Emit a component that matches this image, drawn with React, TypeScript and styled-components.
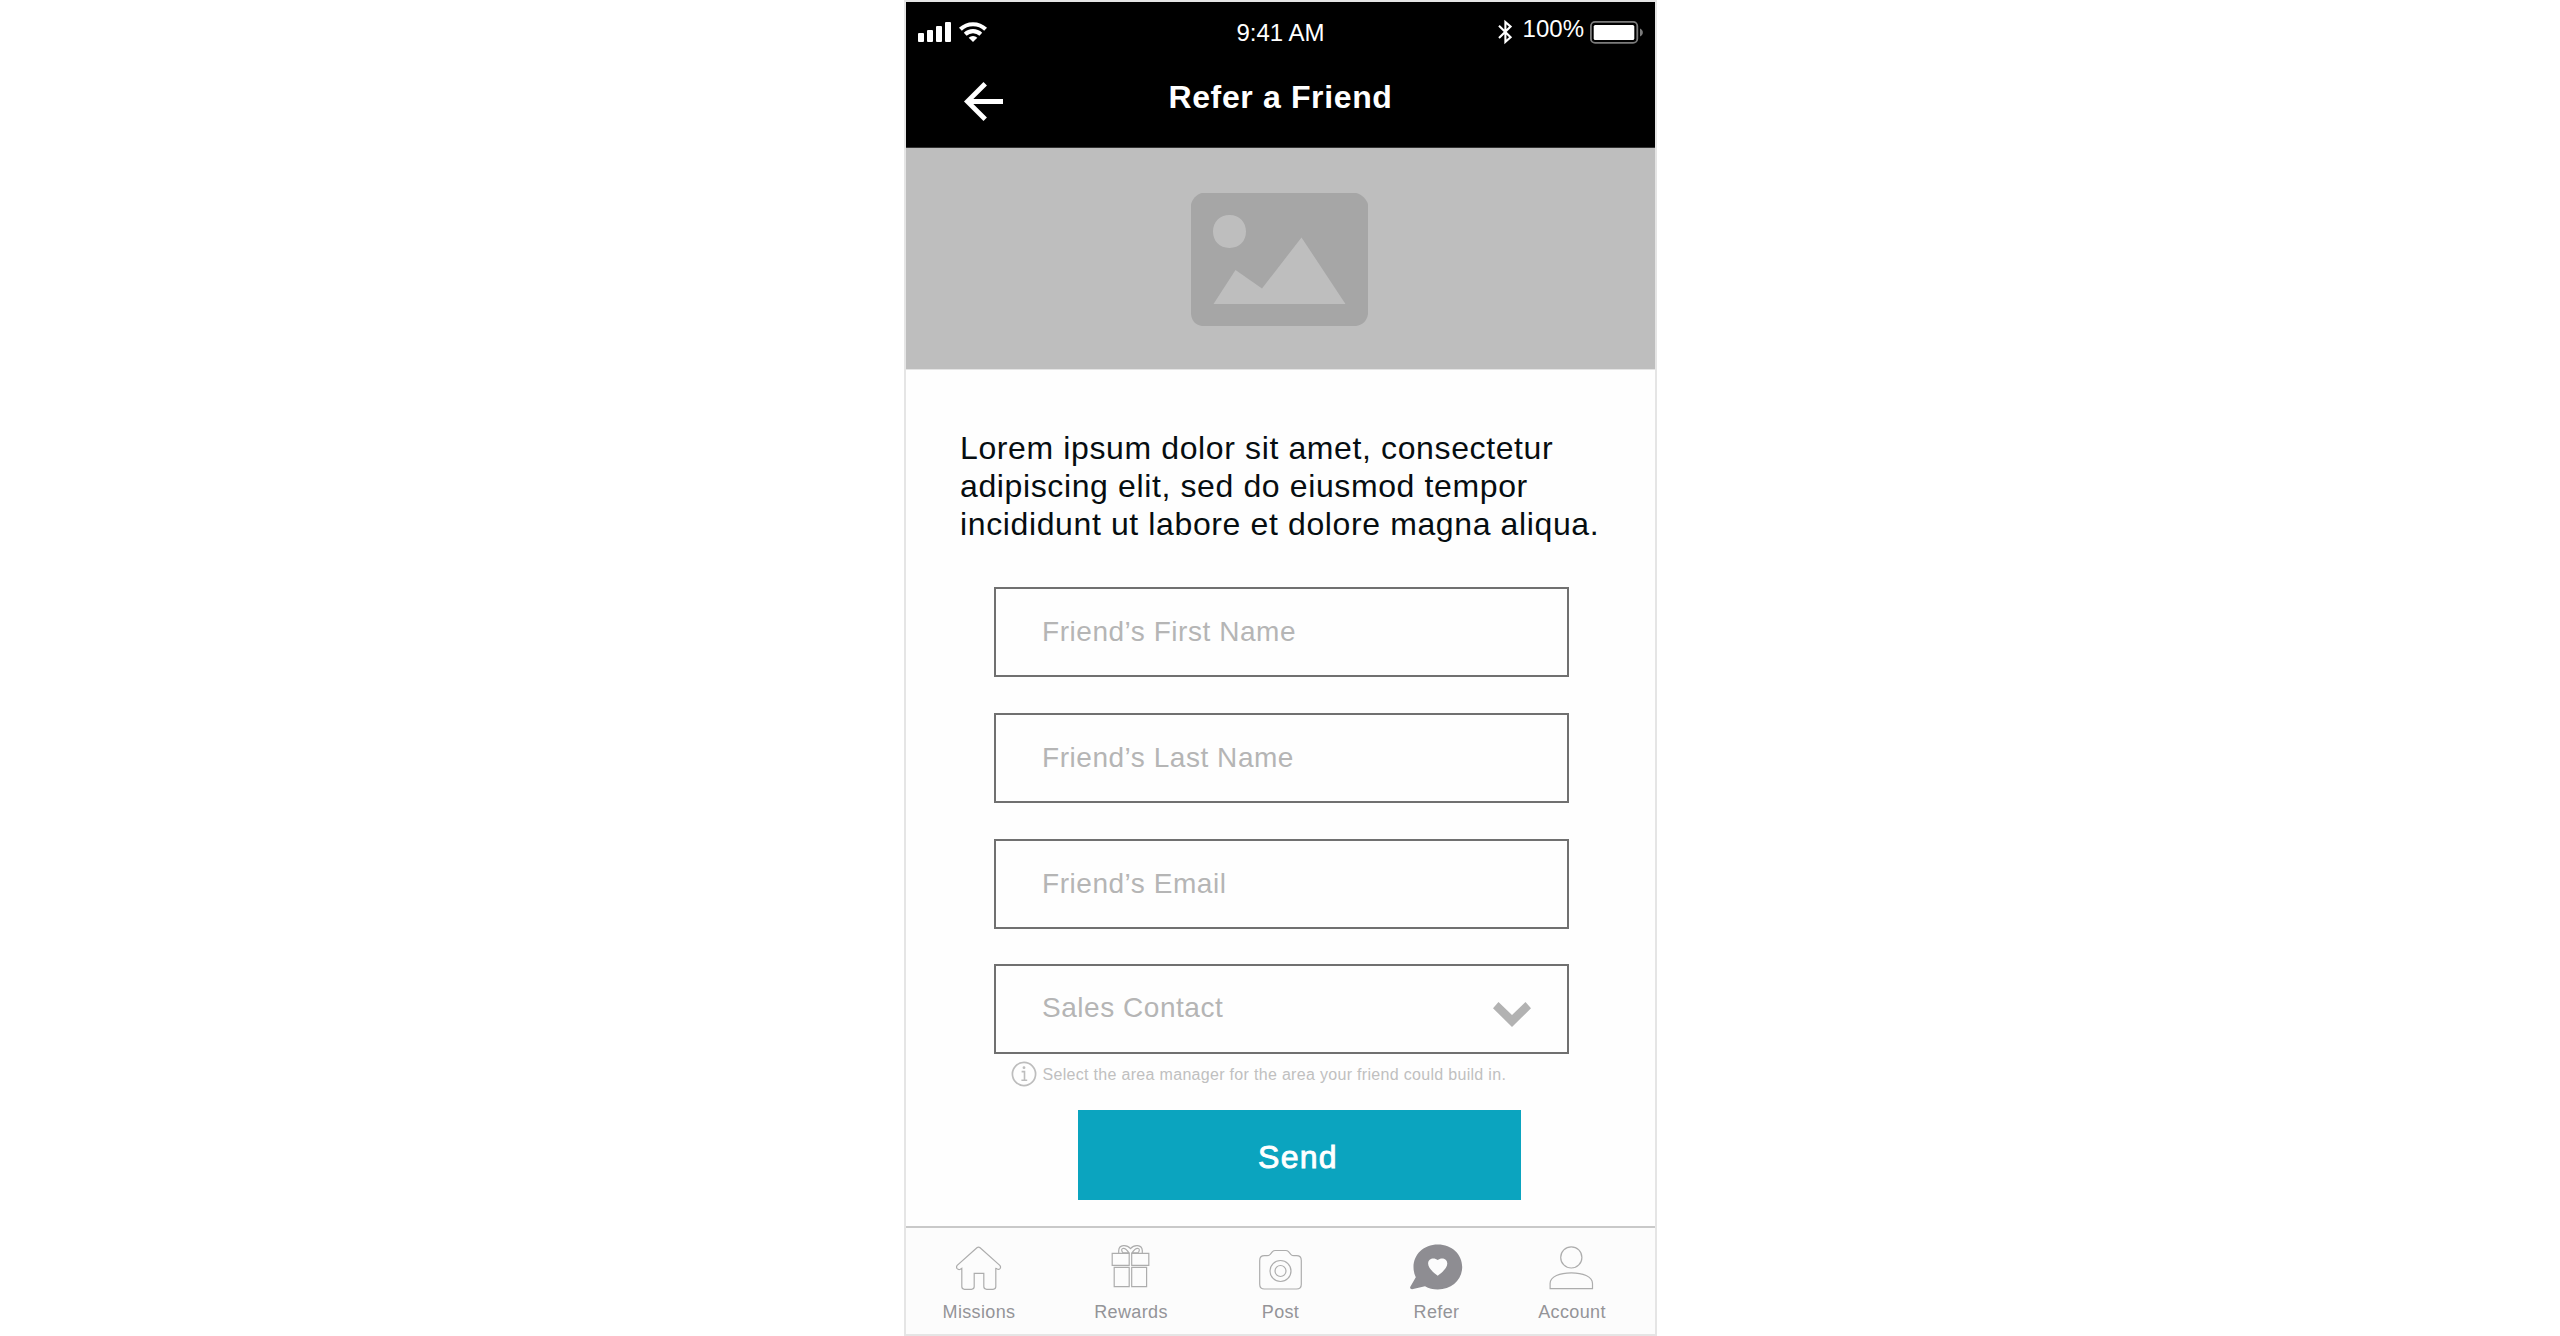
import React from "react";
import styled, { createGlobalStyle } from "styled-components";

const GlobalStyle = createGlobalStyle`
  *, *::before, *::after { box-sizing: border-box; }
  body {
    margin: 0;
    background: #ffffff;
    font-family: "Liberation Sans", Arial, Helvetica, sans-serif;
  }
  svg { display: block; flex: none; }
`;

const Stage = styled.div`
  display: flex;
  justify-content: flex-start;
  width: 2560px;
  height: 1336px;
  padding-left: 904px;
  overflow: hidden;
`;

const Phone = styled.main`
  display: flex;
  flex-direction: column;
  width: 753px;
  height: 1336px;
  border: 2px solid #e5e5e5;
  background: #fefefe;
`;

const Header = styled.header`
  height: 146px;
  flex: none;
  background: #000000;
  border-bottom: 1px solid #333333;
  color: #ffffff;
`;

const StatusBar = styled.div`
  display: grid;
  grid-template-columns: 1fr auto 1fr;
  align-items: start;
  height: 77px;
  padding: 13px 11px 0 12px;
  font-size: 24px;
  line-height: 27px;
`;

const SignalGroup = styled.div`
  padding-top: 7px;
`;

const Clock = styled.time`
  padding: 4px 1px 0 0;
`;

const BatteryGroup = styled.div`
  display: flex;
  justify-content: flex-end;
`;

const BatteryLevel = styled.span`
  margin: 0 6px 0 10px;
`;

const NavBar = styled.div`
  display: grid;
  grid-template-columns: 1fr auto 1fr;
  align-items: start;
  padding: 0 58px;
`;

const Title = styled.h1`
  margin: 0;
  font-size: 32px;
  line-height: 36px;
  font-weight: 700;
  letter-spacing: 0.64px;
`;

const BackButton = styled.button`
  display: flex;
  padding: 3px 0 0;
  border: 0;
  background: none;
  color: inherit;
`;

const Hero = styled.div`
  display: flex;
  justify-content: center;
  height: 222px;
  flex: none;
  padding: 44.7px 1.6px 0 0;
  background: #bebebe;
  border-bottom: 1px solid #e4e4e4;
`;

const Content = styled.section`
  display: flex;
  flex-direction: column;
  height: 856px;
  flex: none;
  padding-top: 59px;
`;

const Intro = styled.p`
  margin: 0 0 44px 54px;
  width: 660px;
  font-size: 32px;
  line-height: 38px;
  letter-spacing: 0.62px;
  color: #060d10;
`;

const Form = styled.div`
  display: flex;
  flex-direction: column;
  gap: 35.8px;
  margin-left: 88px;
  width: 575px;
`;

const Field = styled.div<{ $lift?: number }>`
  display: flex;
  justify-content: space-between;
  height: 90px;
  padding: ${(p) => 27 - (p.$lift ?? 0)}px 36.5px 0 46px;
  border: 2px solid #707070;
  font-size: 28px;
  line-height: 31px;
  letter-spacing: 0.54px;
  color: #b5b5b5;
`;

const Hint = styled.div`
  display: flex;
  margin: 7px 0 0 105px;
  font-size: 16px;
  line-height: 18px;
  letter-spacing: 0.31px;
  color: #c0c0c0;
`;

const HintText = styled.span`
  margin: 5px 0 0 5.500px;
`;

const SendButton = styled.button`
  width: 443px;
  height: 90px;
  margin: 23px 0 0 172px;
  padding: 3px 3px 0 0;
  border: 0;
  background: #0ba4bf;
  color: #ffffff;
  font-family: inherit;
  font-size: 32px;
  line-height: 36px;
  letter-spacing: 1.3px;
  -webkit-text-stroke: 0.9px #ffffff;
`;

const TabBar = styled.nav`
  display: grid;
  grid-template-columns: 146px 158px 141px 171px 100px;
  flex: 1;
  padding-top: 12px;
  border-top: 2px solid #c9c9c9;
  background: #fcfcfc;
`;

const Tab = styled.a`
  display: flex;
  flex-direction: column;
  align-items: center;
  gap: 10px;
  font-size: 18px;
  line-height: 20px;
  letter-spacing: 0.36px;
  color: #949498;
`;

const TabIcon = ({ children }: { children: React.ReactNode }) => (
  <svg width="60" height="52" viewBox="0.5 0 60 52" fill="none" stroke="#adadad" strokeWidth="1.2">
    {children}
  </svg>
);

const Signal = () => (
  <svg width="70" height="20" viewBox="0 0 70 20" fill="#fff">
    <rect x="0" y="11" width="6" height="9" rx="1" />
    <rect x="9" y="8" width="6" height="12" rx="1" />
    <rect x="18" y="4" width="6" height="16" rx="1" />
    <rect x="27" y="0" width="6" height="20" rx="1" />
    <g fill="none" stroke="#fff" strokeWidth="4.1">
      <path d="M42.400 7.300a18.200 18.200 0 0 1 25.200 0" />
      <path d="M47.200 12.200a11.500 11.500 0 0 1 15.600 0" />
    </g>
    <path d="M50.700 15.700a6.200 6.200 0 0 1 8.600 0L55 20z" />
  </svg>
);

const Bluetooth = () => (
  <svg width="15" height="34" viewBox="0 0 15 34" fill="none" stroke="#fff" strokeWidth="2.1">
    <path d="M1 10.800l11.600 11.500-5.200 4.600V7l5.200 4.600L1 23" />
  </svg>
);

const Battery = () => (
  <svg width="54" height="30" viewBox="0 0 54 30">
    <rect x="0.9" y="6.9" width="46.4" height="21" rx="4.2" fill="none" stroke="#7b7b7b" strokeWidth="1.8" />
    <rect x="3.7" y="10" width="40.6" height="15" rx="1.6" fill="#fff" />
    <path d="M50 13.4c3.8 1.5 3.8 6.5 0 8z" fill="#7b7b7b" />
  </svg>
);

const BackArrow = () => (
  <svg width="39" height="39" viewBox="4 4 16 16" fill="#fff">
    <path d="M20 11H7.83l5.59-5.59L12 4l-8 8 8 8 1.41-1.41L7.83 13H20v-2z" />
  </svg>
);

const Placeholder = () => (
  <svg width="177" height="133" viewBox="0 0 177 133">
    <path
      d="M11 0H165C170 0.6 176.4 7 177 11.5V121C176 128 171 132.4 165 133H11C5 132.4 0.6 128 0 121V11.5C0.6 7 6 0.6 11 0Z"
      fill="#a6a6a6"
    />
    <path
      d="M38.5 22C48.5 22 55 29 55 38.6S48.5 55 38.5 55 22 48.2 22 38.6 28.5 22 38.5 22ZM22.5 111L44.5 77 71 95.5 110.5 44.5 154.5 111Z"
      fill="#bebebe"
    />
  </svg>
);

const Chevron = () => (
  <svg width="38" height="26" viewBox="0 0 38 26">
    <path d="M0 6.2L5.500 0 19 13 32.500 0 38 6.200 19 25Z" fill="#b2b2b2" />
  </svg>
);

const ChevronSlot = styled.span`
  padding-top: 10.500px;
`;

const Info = () => (
  <svg width="26" height="26" viewBox="0 0 26 26" fill="none" stroke="#bdbdbd" strokeWidth="1.7">
    <circle cx="13" cy="13" r="11.6" />
    <path d="M10.6 10.600h2.900v8.600M10.400 19.200h5.800" strokeWidth="1.6" />
    <circle cx="13" cy="6.700" r="1.400" fill="#bdbdbd" stroke="none" />
  </svg>
);

const House = () => (
  <TabIcon>
    <path d="M28.4 7.8Q30 6.6 31.6 7.8L51.3 25.4Q52.7 27 51.5 28.6Q50 30 48.2 28.6L47.3 28.4V46.6Q47.3 49.3 44.6 49.3H38.2Q35.3 49.3 35.3 46.6V33.4H25.7V46.6Q25.7 49.3 23 49.3H16Q13.3 49.3 13.3 46.6V28.4L11.8 29.3Q10 30 8.6 28.6Q7.4 27 8.7 25.4Z" />
  </TabIcon>
);

const Gift = () => (
  <TabIcon>
    <path d="M11.7 13.3H28.7V25.3H11.7ZM31.2 13.3H48.3V25.3H31.2ZM13.7 27.3H28.7V46.6H13.7ZM31.2 27.3H46.1V46.6H31.2Z" />
    <path d="M18.2 13V10.6C18.6 4.5 26.2 4.3 30 8.7C33.8 4.3 41.4 4.5 41.8 10.6V13" />
    <path d="M28.5 12.9H22.5C18.8 8.8 23.5 5.3 28.5 12.9ZM31.5 12.9H37.5C41.2 8.8 36.5 5.3 31.5 12.9Z" />
  </TabIcon>
);

const Camera = () => (
  <TabIcon>
    <path d="M14 15.7H16.5Q18.4 15.7 19.7 14.3L22 11.7Q23.1 10.5 24.8 10.5H35.2Q36.9 10.5 38 11.7L40.3 14.3Q41.6 15.7 43.5 15.7H46Q50.8 15.7 50.8 20.5V44.2Q50.8 49 46 49H14Q9.2 49 9.2 44.2V20.5Q9.2 15.7 14 15.7Z" />
    <circle cx="30" cy="31" r="10.5" />
    <circle cx="30" cy="31" r="5.5" />
  </TabIcon>
);

const ChatHeart = () => (
  <TabIcon>
    <g stroke="none">
      <path
        d="M31.3 4.5C45.3 4.5 55.7 14.4 55.7 27S45.3 49.5 31.3 49.5C26.5 49.5 22.3 48.3 18.5 46.2L5.5 49.2Q3.2 49.2 3.7 47L9.3 37.2C7.7 34 7 30.7 7 27C7 14.4 17.3 4.5 31.3 4.5Z"
        fill="#8e8d92"
      />
      <path
        d="M31.2 35.8C27.5 32.8 21.6 28.3 21.6 23.5C21.6 18 28 17.1 31.2 20C34.4 17.1 40.8 18 40.8 23.5C40.8 28.3 34.9 32.8 31.2 35.8Z"
        fill="#fcfcfc"
      />
    </g>
  </TabIcon>
);

const Person = () => (
  <TabIcon>
    <circle cx="29.8" cy="17.4" r="10.6" />
    <path d="M8.6 48.6V43.5C8.6 36.5 18.5 32.8 29.8 32.8S51 36.5 51 43.5V48.6Z" />
  </TabIcon>
);

const tabs = [
  { label: "Missions", Icon: House },
  { label: "Rewards", Icon: Gift },
  { label: "Post", Icon: Camera },
  { label: "Refer", Icon: ChatHeart },
  { label: "Account", Icon: Person },
];

export default function App() {
  return (
    <>
      <GlobalStyle />
      <Stage>
        <Phone>
          <Header>
            <StatusBar>
              <SignalGroup>
                <Signal />
              </SignalGroup>
              <Clock>9:41 AM</Clock>
              <BatteryGroup>
                <Bluetooth />
                <BatteryLevel>100%</BatteryLevel>
                <Battery />
              </BatteryGroup>
            </StatusBar>
            <NavBar>
              <BackButton aria-label="Back">
                <BackArrow />
              </BackButton>
              <Title>Refer a Friend</Title>
            </NavBar>
          </Header>
          <Hero>
            <Placeholder />
          </Hero>
          <Content>
            <Intro>
              Lorem ipsum dolor sit amet, consectetur
              <br />
              adipiscing elit, sed do eiusmod tempor
              <br />
              incididunt ut labore et dolore magna aliqua.
            </Intro>
            <Form>
              <Field>Friend’s First Name</Field>
              <Field>Friend’s Last Name</Field>
              <Field>Friend’s Email</Field>
              <Field $lift={1.5}>
                Sales Contact
                <ChevronSlot>
                  <Chevron />
                </ChevronSlot>
              </Field>
            </Form>
            <Hint>
              <Info />
              <HintText>Select the area manager for the area your friend could build in.</HintText>
            </Hint>
            <SendButton>Send</SendButton>
          </Content>
          <TabBar>
            {tabs.map(({ label, Icon }) => (
              <Tab key={label}>
                <Icon />
                {label}
              </Tab>
            ))}
          </TabBar>
        </Phone>
      </Stage>
    </>
  );
}
